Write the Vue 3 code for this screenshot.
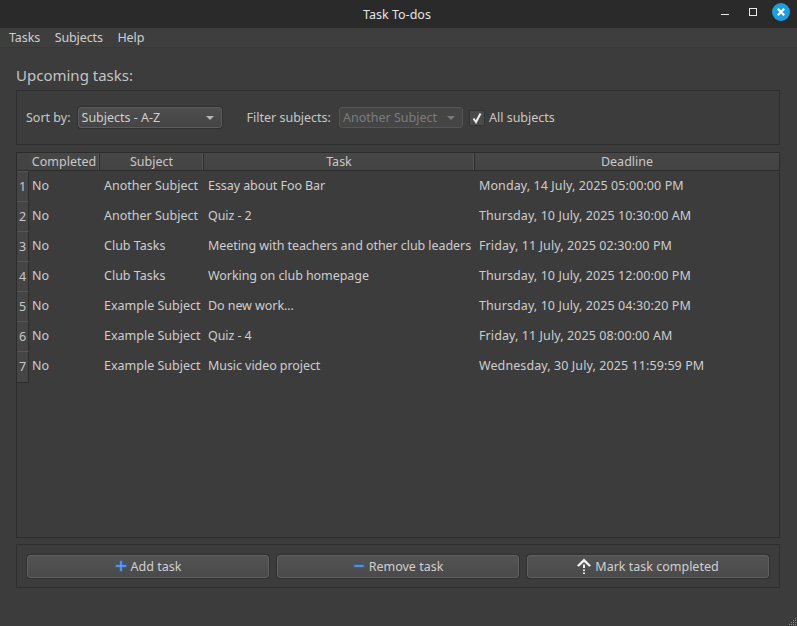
<template>
  <div class="window">
    <div class="titlebar">
      <span class="title">Task To-dos</span>
      <div class="win-buttons">
        <svg width="14" height="14" viewBox="0 0 14 14"><path d="M1 9.500h8" stroke="#e8e8e8" stroke-width="1" fill="none" /></svg>
        <svg width="14" height="14" viewBox="0 0 14 14"><rect x="3.500" y="3.500" width="7" height="7" stroke="#e8e8e8" fill="none" /></svg>
        <svg width="18" height="18" viewBox="0 0 18 18">
          <circle cx="9" cy="9" r="9" fill="#1f9ede" />
          <path d="M5.800 5.800l6.400 6.400M12.200 5.800l-6.400 6.400" stroke="#fff" stroke-width="2.200" fill="none" />
        </svg>
      </div>
    </div>

    <div class="menubar">
      <span v-for="m in menus" :key="m">{{ m }}</span>
    </div>

    <div class="content">
      <div class="heading">Upcoming tasks:</div>

      <div class="group filters">
        <span class="lbl">Sort by:</span>
        <div class="combo sort">
          <span>Subjects - A-Z</span>
          <i class="arrow"></i>
        </div>
        <span class="lbl filter-lbl">Filter subjects:</span>
        <div class="combo subject disabled">
          <span>Another Subject</span>
          <i class="arrow"></i>
        </div>
        <div class="check">
          <svg width="12" height="12" viewBox="0 0 12 12"><path d="M2.500 6.500l2.500 3.500L9.500 1.500" stroke="#eee" stroke-width="2" fill="none" /></svg>
        </div>
        <span class="lbl">All subjects</span>
      </div>

      <div class="table">
        <div class="thead">
          <div class="corner"></div>
          <div class="th c1">Completed</div>
          <div class="th c2">Subject</div>
          <div class="th c3">Task</div>
          <div class="th c4">Deadline</div>
        </div>
        <div v-for="(t, i) in tasks" :key="i" class="row">
          <div class="num">{{ i + 1 }}</div>
          <div class="td c1">{{ t.done }}</div>
          <div class="td c2">{{ t.subject }}</div>
          <div class="td c3">{{ t.task }}</div>
          <div class="td c4">{{ t.deadline }}</div>
        </div>
      </div>

      <div class="group actions">
        <button>
          <svg width="12" height="12" viewBox="0 0 12 12">
            <path d="M6 0v12M0 6h12" stroke="#2f62ad" stroke-width="3.400" fill="none" />
            <path d="M6 1v10M1 6h10" stroke="#6ea3e6" stroke-width="1.400" fill="none" />
          </svg>
          Add task
        </button>
        <button>
          <svg width="12" height="12" viewBox="0 0 12 12">
            <path d="M0.500 6h11" stroke="#2f62ad" stroke-width="3.400" fill="none" />
            <path d="M1.500 6h9" stroke="#6ea3e6" stroke-width="1.400" fill="none" />
          </svg>
          Remove task
        </button>
        <button>
          <svg width="14" height="16" viewBox="0 0 14 16">
            <path d="M0 7.500L7 0.500l7 7-1.800 1.200L7 4 1.800 8.700z" fill="#f0f0f0" />
            <path d="M7 6.500v3.500M7 11.500v1.500M7 14.500v1.500" stroke="#f0f0f0" stroke-width="2" fill="none" />
          </svg>
          Mark task completed
        </button>
      </div>
    </div>

    <svg class="grip" width="8" height="8" viewBox="0 0 8 8">
      <path d="M6 0h1v1H6zM4 2h1v1H4zM6 2h1v1H6zM2 4h1v1H2zM4 4h1v1H4zM6 4h1v1H6zM0 6h1v1H0zM2 6h1v1H2zM4 6h1v1H4zM6 6h1v1H6z" fill="#8a8a8a" />
    </svg>
  </div>
</template>

<script setup>
const menus = ['Tasks', 'Subjects', 'Help']

const tasks = [
  { done: 'No', subject: 'Another Subject', task: 'Essay about Foo Bar', deadline: 'Monday, 14 July, 2025 05:00:00 PM' },
  { done: 'No', subject: 'Another Subject', task: 'Quiz - 2', deadline: 'Thursday, 10 July, 2025 10:30:00 AM' },
  { done: 'No', subject: 'Club Tasks', task: 'Meeting with teachers and other club leaders', deadline: 'Friday, 11 July, 2025 02:30:00 PM' },
  { done: 'No', subject: 'Club Tasks', task: 'Working on club homepage', deadline: 'Thursday, 10 July, 2025 12:00:00 PM' },
  { done: 'No', subject: 'Example Subject', task: 'Do new work...', deadline: 'Thursday, 10 July, 2025 04:30:20 PM' },
  { done: 'No', subject: 'Example Subject', task: 'Quiz - 4', deadline: 'Friday, 11 July, 2025 08:00:00 AM' },
  { done: 'No', subject: 'Example Subject', task: 'Music video project', deadline: 'Wednesday, 30 July, 2025 11:59:59 PM' },
]
</script>

<style>
html, body { margin: 0; background: #3c3c3c; overflow: hidden; }
</style>

<style scoped>
.window {
  position: relative;
  width: 797px;
  height: 626px;
  background: #3c3c3c;
  color: #cfcfcf;
  font-family: "Noto Sans", "Open Sans", sans-serif;
  font-size: 12.500px;
  overflow: hidden;
}

.titlebar {
  position: relative;
  height: 28px;
  background: #2a2a2a;
  display: flex;
  align-items: center;
  justify-content: center;
}
.title { color: #e4e4e4; margin-right: 3px; }
.win-buttons {
  position: absolute;
  right: 7px;
  top: 3px;
  display: flex;
  align-items: center;
  gap: 12px;
}

.menubar {
  height: 18px;
  background: #3e3e3e;
  border-bottom: 1px solid #383838;
  display: flex;
  align-items: center;
  gap: 14.500px;
  padding-left: 9px;
  padding-bottom: 1px;
  letter-spacing: -0.1px;
}

.content {
  padding: 0 16px;
  display: flex;
  flex-direction: column;
}
.heading {
  font-size: 15px;
  line-height: 20px;
  color: #c4c4c4;
  margin-top: 17px;
  margin-bottom: 5px;
}

.group {
  border: 1px solid #2f2f2f;
  box-sizing: border-box;
  width: 764px;
  display: flex;
  align-items: center;
}
.filters {
  height: 55px;
  padding-left: 9px;
}
.lbl { color: #c8c8c8; }
.filter-lbl { margin-left: 25px; }

.combo {
  height: 21px;
  box-sizing: border-box;
  margin-left: 7px;
  padding: 0 5px 0 3px;
  border: 1px solid #5c5c5c;
  border-radius: 3px;
  background: linear-gradient(#4e4e4e, #444);
  box-shadow: 0 0 0 1px #303030;
  display: flex;
  align-items: center;
  justify-content: space-between;
  color: #cfcfcf;
}
.sort { width: 144px; }
.subject { width: 124px; margin-left: 8px; }
.disabled { color: #7c7c7c; background: #454545; box-shadow: none; border-color: #555; }
.arrow {
  width: 0;
  height: 0;
  border-left: 4px solid transparent;
  border-right: 4px solid transparent;
  border-top: 4px solid #b4b4b4;
  margin-right: 2px;
}
.disabled .arrow { border-top-color: #7a7a7a; }

.check {
  width: 14px;
  height: 14px;
  margin: 0 4px 0 6px;
  background: #4a4a4a;
  border: 1px solid #333;
  border-radius: 2px;
  display: flex;
  align-items: center;
  justify-content: center;
}

.table {
  width: 764px;
  height: 386px;
  box-sizing: border-box;
  margin-top: 7px;
  margin-bottom: 6px;
  border: 1px solid #2c2c2c;
}
.thead, .row {
  display: grid;
  grid-template-columns: 12px 71px 104px 271px 1fr;
}
.thead {
  height: 17px;
  background: linear-gradient(#474747, #434343);
  border-bottom: 1px solid #2c2c2c;
}
.th {
  text-align: center;
  line-height: 17px;
  border-right: 1px solid #2c2c2c;
  box-shadow: inset -1px 0 0 #565656;
  color: #c8c8c8;
  white-space: nowrap;
  overflow: hidden;
}
.th.c4 { border-right: none; box-shadow: none; }
.corner { background: #434343; }
.row { height: 30px; }
.num {
  background: #454545;
  border-right: 1px solid #2c2c2c;
  border-bottom: 1px solid #2c2c2c;
  border-top: 1px solid #565656;
  box-sizing: border-box;
  text-align: center;
  line-height: 30px;
  color: #c8c8c8;
}
.td {
  padding-left: 4px;
  line-height: 29px;
  white-space: nowrap;
  overflow: hidden;
  color: #cdcdcd;
}
.td.c1 { padding-left: 3px; }
.td.c3 { letter-spacing: -0.07px; }
.td.c4 { letter-spacing: 0.09px; }

.actions {
  height: 44px;
  gap: 8px;
  padding: 0 10px;
}
button {
  width: 242px;
  height: 23px;
  padding: 0;
  border: 1px solid #606060;
  border-radius: 3px;
  background: linear-gradient(#535353, #4a4a4a);
  box-shadow: 0 0 0 1px #303030;
  color: #cfcfcf;
  font: inherit;
  display: flex;
  align-items: center;
  justify-content: center;
  gap: 4px;
}

.grip { position: absolute; right: 0; bottom: 0; }
</style>
